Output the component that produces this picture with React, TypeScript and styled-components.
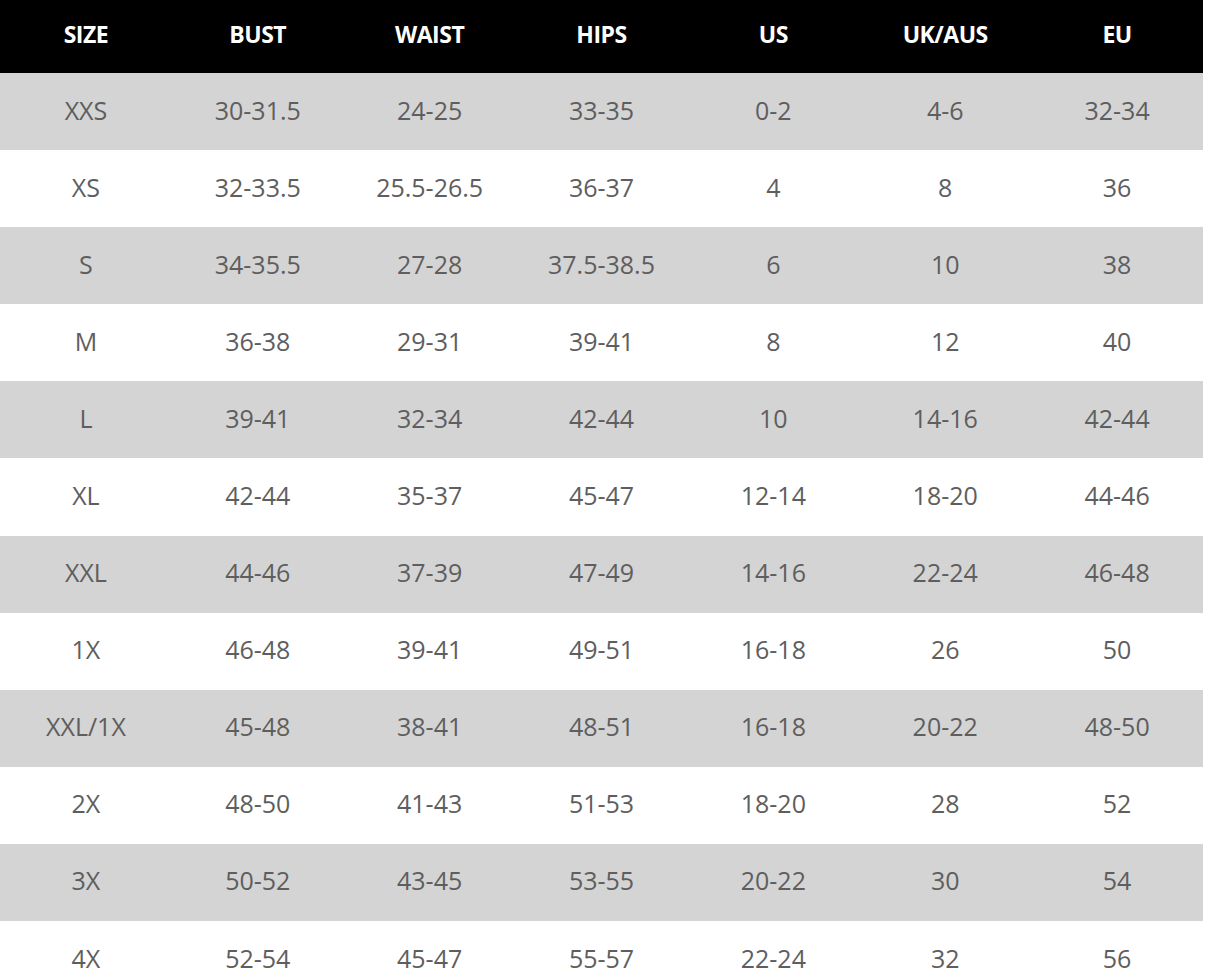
import React from "react";
import styled, { createGlobalStyle } from "styled-components";

const Global = createGlobalStyle`
  html, body { margin: 0; padding: 0; background: #ffffff; }
  body { font-family: "Open Sans", "Liberation Sans", sans-serif; }
`;

const Table = styled.div`
  width: 1203px;
  display: flex;
  flex-direction: column;
`;

const HeaderRow = styled.div`
  display: grid;
  grid-template-columns: repeat(7, 1fr);
  height: 73px;
  background: #000000;
  align-items: center;
  padding-bottom: 5px;
  box-sizing: border-box;
`;

const HeaderCell = styled.div`
  text-align: center;
  color: #ffffff;
  font-family: "Open Sans", "Liberation Sans", sans-serif;
  font-weight: 700;
  font-size: 23px;
  letter-spacing: -0.5px;
`;

const Row = styled.div<{ $shaded: boolean }>`
  display: grid;
  grid-template-columns: repeat(7, 1fr);
  height: 77.1px;
  align-items: center;
  padding-bottom: 4px;
  box-sizing: border-box;
  background: ${(p) => (p.$shaded ? "#d4d4d4" : "#ffffff")};
`;

const Cell = styled.div`
  text-align: center;
  color: #5e5e5e;
  font-family: "Open Sans", "Liberation Sans", sans-serif;
  font-weight: 400;
  font-size: 25px;
  letter-spacing: 0;
`;

const headers = ["SIZE", "BUST", "WAIST", "HIPS", "US", "UK/AUS", "EU"];

const rows: string[][] = [
  ["XXS", "30-31.5", "24-25", "33-35", "0-2", "4-6", "32-34"],
  ["XS", "32-33.5", "25.5-26.5", "36-37", "4", "8", "36"],
  ["S", "34-35.5", "27-28", "37.5-38.5", "6", "10", "38"],
  ["M", "36-38", "29-31", "39-41", "8", "12", "40"],
  ["L", "39-41", "32-34", "42-44", "10", "14-16", "42-44"],
  ["XL", "42-44", "35-37", "45-47", "12-14", "18-20", "44-46"],
  ["XXL", "44-46", "37-39", "47-49", "14-16", "22-24", "46-48"],
  ["1X", "46-48", "39-41", "49-51", "16-18", "26", "50"],
  ["XXL/1X", "45-48", "38-41", "48-51", "16-18", "20-22", "48-50"],
  ["2X", "48-50", "41-43", "51-53", "18-20", "28", "52"],
  ["3X", "50-52", "43-45", "53-55", "20-22", "30", "54"],
  ["4X", "52-54", "45-47", "55-57", "22-24", "32", "56"],
];

export default function App() {
  return (
    <>
      <Global />
      <Table>
        <HeaderRow>
          {headers.map((h) => (
            <HeaderCell key={h}>{h}</HeaderCell>
          ))}
        </HeaderRow>
        {rows.map((r, i) => (
          <Row key={r[0]} $shaded={i % 2 === 0}>
            {r.map((c, j) => (
              <Cell key={j}>{c}</Cell>
            ))}
          </Row>
        ))}
      </Table>
    </>
  );
}
